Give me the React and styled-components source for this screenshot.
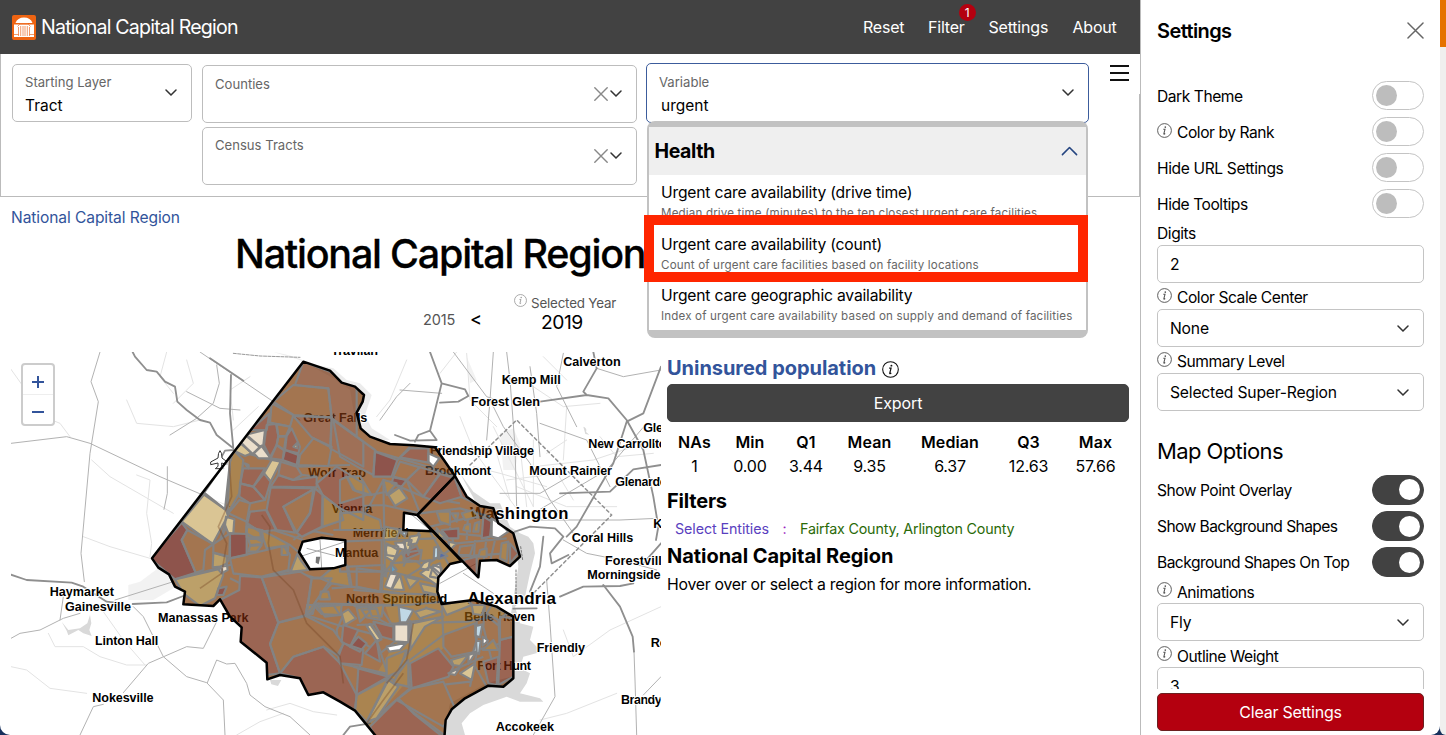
import React from 'react';
import styled, { createGlobalStyle } from 'styled-components';

const Global = createGlobalStyle`
  *{box-sizing:border-box}
  html,body{margin:0;height:735px;overflow:hidden;background:#17305c}
  body{font-family:Inter,"Liberation Sans",sans-serif;color:#000;font-size:16px;line-height:1.5;letter-spacing:-.2px}
`;
const Shell = styled.div`display:flex;width:1446px;height:735px;overflow:hidden;background:#17305c;`;
const Main = styled.main`width:1140px;height:735px;background:#fff;border-bottom-left-radius:10px;overflow:hidden;display:flex;flex-direction:column;`;
const Header = styled.header`height:54px;flex:none;background:#424242;color:#fff;display:flex;align-items:center;padding:0 24.5px 0 12px;`;
const Brand = styled.div`display:flex;align-items:center;gap:5px;font-size:19.6px;letter-spacing:-.8px;flex:1;padding-top:1px;svg{margin-top:1px}`;
const Nav = styled.nav`display:flex;gap:24px;`;
const NavItem = styled.a`position:relative;width:${p => p.$w}px;white-space:nowrap;letter-spacing:-.2px;`;
const Badge = styled.span`position:absolute;right:-11px;top:-11px;width:17px;height:17px;border-radius:50%;background:#b4000f;font-size:12px;line-height:17px;text-align:center;`;
const Controls = styled.section`position:relative;z-index:2;flex:none;height:143px;padding:9px 10px 0 11px;border:1px solid #bbb;border-top:0;border-right:0;display:flex;align-items:flex-start;`;
const RightEdge = styled.i`position:absolute;right:0;top:40px;bottom:0;width:1px;background:#bbb;`;
const Field = styled.div`position:relative;width:${p => p.$w}px;height:${p => p.$h || 58}px;margin-top:${p => p.$mt || 0}px;border:${p => (p.$focus ? '1.5px solid #3c5c9c' : '1px solid #bdbdbd')};border-radius:5px;background:#fff;display:flex;align-items:center;justify-content:space-between;padding:0 14px 0 12px;`;
const FieldText = styled.div`display:flex;flex-direction:column;align-self:flex-start;padding-top:${p => p.$top || 8}px;`;
const Small = styled.span`font-size:13.1px;line-height:19px;color:#666;letter-spacing:0;`;
const Value = styled.span`line-height:28px;padding-left:${p => p.$pl || 0}px;font-size:15.5px;letter-spacing:0;`;
const Stack = styled.div`display:flex;flex-direction:column;gap:3.5px;margin:2px 9px 0 10px;`;
const IconPair = styled.div`display:flex;align-items:center;gap:2px;`;
const Combo = styled.div`position:relative;`;
const MenuButton = styled.div`margin:1px 0 0 21px;height:18px;display:flex;`;
const Dropdown = styled.div`position:absolute;z-index:3;top:58px;left:1px;width:441px;height:217px;background:#c2c2c2;border-radius:8px;padding:6px 2px 8px;`;
const Group = styled.div`height:48px;background:#efefef;display:flex;align-items:center;justify-content:space-between;padding:1px 8px 0 5.5px;font-weight:700;font-size:19.5px;letter-spacing:-.4px;`;
const Options = styled.div`background:#fff;height:155px;padding-top:4px;`;
const Option = styled.div`height:51.7px;padding-left:12px;white-space:nowrap;`;
const OptionName = styled.div`line-height:27px;font-size:15.7px;letter-spacing:-.2px;`;
const OptionNote = styled.div`line-height:15px;font-size:11.6px;color:#666;letter-spacing:.16px;`;
const Highlight = styled.div`position:absolute;left:-3px;top:94px;width:444px;height:67px;border:10px solid #ff2600;`;
const Crumb = styled.a`flex:none;color:#32549b;font-size:15.6px;line-height:24px;padding:9px 0 0 11px;letter-spacing:-.1px;`;
const Title = styled.h1`flex:none;margin:0;height:57px;line-height:48px;font-size:39.5px;font-weight:500;padding-left:235px;letter-spacing:-1.24px;white-space:nowrap;-webkit-text-stroke:.3px #000;`;
const Years = styled.div`flex:none;height:65px;display:flex;align-items:flex-start;padding-left:423px;white-space:nowrap;`;
const YearEnd = styled.span`font-size:14.5px;color:#555;line-height:20px;margin-top:23px;width:47px;letter-spacing:-.1px;`;
const YearStep = styled.span`font-size:18px;line-height:20px;width:44px;margin-top:22px;font-weight:500;`;
const YearPick = styled.div`display:flex;flex-direction:column;width:120px;`;
const YearLabel = styled.div`display:flex;gap:4px;font-size:13.4px;line-height:17px;margin-top:8px;color:#555;letter-spacing:-.2px;svg{margin-top:-1px}`;
const YearValue = styled.div`font-size:19.3px;line-height:21px;padding-left:27px;letter-spacing:-.5px;`;
const Content = styled.div`display:flex;flex:1;`;
const MapPane = styled.div`position:relative;width:650px;height:383px;margin-left:11px;overflow:hidden;svg{display:block}`;
const ZoomBox = styled.div`position:absolute;left:10px;top:11px;width:34px;height:63px;border:2px solid #ccc;border-radius:4px;background:#fff;display:flex;flex-direction:column;`;
const ZoomKey = styled.div`flex:1;display:flex;align-items:center;justify-content:center;padding-top:4px;border-bottom:${p => (p.$line ? '1px solid #eee' : '0')};`;
const Info = styled.section`width:462px;margin-left:6px;padding-top:1px;`;
const Heading = styled.h2`margin:0;height:${p => p.$h || 30}px;line-height:30px;font-size:20px;font-weight:${p => p.$wt || 700};letter-spacing:${p => p.$ls || 0}px;color:${p => p.$c || '#000'};display:flex;align-items:center;gap:6px;white-space:nowrap;svg{margin-top:2px}`;
const Export = styled.button`display:block;width:100%;height:38px;border:1px solid #424242;border-radius:5px;background:#424242;color:#fff;font:16px Inter,sans-serif;letter-spacing:-.1px;padding:0;margin-top:1px;`;
const Stats = styled.div`display:grid;grid-template-columns:55px 56px 56px 71px 90px 67px 67px;grid-auto-rows:24px;line-height:24px;text-align:center;padding-top:8px;height:63px;`;
const StatHead = styled.b`font-weight:600;letter-spacing:.1px;`;
const Rule = styled.div`display:flex;gap:13.5px;height:24px;line-height:24px;font-size:14.3px;padding-left:8px;`;
const Tone = styled.span`color:${p => p.$c};letter-spacing:${p => p.$ls || 0}px;`;
const Hint = styled.p`margin:0;line-height:28px;font-size:15.8px;letter-spacing:-.26px;white-space:nowrap;`;
const Side = styled.aside`width:300px;height:735px;background:#fff;border-left:1px solid #bbb;border-bottom-right-radius:9px;padding:0 16px;display:flex;flex-direction:column;`;
const SideHead = styled.div`height:78px;flex:none;display:flex;justify-content:space-between;align-items:flex-start;padding-top:16px;font-size:20px;font-weight:600;letter-spacing:-.6px;svg{margin-top:6px}`;
const SideBody = styled.div`height:611px;overflow:hidden;`;
const Row = styled.div`height:36.1px;display:flex;align-items:center;justify-content:space-between;white-space:nowrap;`;
const Label = styled.span`display:flex;align-items:center;gap:5px;height:22.5px;padding-top:2px;line-height:22.5px;font-size:15.6px;letter-spacing:${p => p.$ls ?? -0.45}px;white-space:nowrap;svg{margin-top:-6px}`;
const Switch = styled.span`width:52px;height:${p => (p.$on ? 30 : 29)}px;border-radius:15px;border:1px solid ${p => (p.$on ? '#424242' : '#c4c4c4')};background:${p => (p.$on ? '#424242' : '#fff')};display:flex;align-items:center;justify-content:${p => (p.$on ? 'flex-end' : 'flex-start')};padding:0 3px;margin-top:-1px;
  &::after{content:'';width:21px;height:21px;border-radius:50%;background:${p => (p.$on ? '#fff' : '#bdbdbd')};}`;
const Input = styled.div`height:38px;border:1px solid #c4c4c4;border-radius:5px;display:flex;align-items:center;justify-content:space-between;padding:1px 14px 0 12px;margin:0 0 3.5px;font-size:15.7px;letter-spacing:-.2px;`;
const SubHead = styled.h3`margin:0;height:58px;padding-top:20px;line-height:34px;font-size:22px;font-weight:400;letter-spacing:-.6px;`;
const Clear = styled.button`flex:none;margin-top:4px;height:38px;border:1px solid #6b2020;border-radius:5px;background:#b4000f;color:#fff;font:16px Inter,sans-serif;letter-spacing:-.25px;padding:0;`;
const Edge = styled.div`width:6px;height:735px;background:#f0efee;border-top:47px solid #e57200;border-bottom-left-radius:6px;`;

const Chevron = ({ w = 12, up, c = '#333', sw = 1.5 }) => (
  <svg width={w} height={w * 0.6} viewBox="0 0 12 7" fill="none" stroke={c} strokeWidth={sw} strokeLinecap="round" strokeLinejoin="round"><path d={up ? 'M1 6 6 1l5 5' : 'M1 1l5 5 5-5'} /></svg>
);
const Cross = ({ s = 14, c = '#777', w = 1.4 }) => (
  <svg width={s} height={s} viewBox="0 0 14 14" stroke={c} strokeWidth={w} strokeLinecap="round"><path d="M.8.8l12.4 12.4M13.2.8.8 13.2" /></svg>
);
const InfoMark = ({ s = 15, c = '#555' }) => (
  <svg width={s} height={s} viewBox="0 0 15 15" fill="none" stroke={c}><circle cx="7.5" cy="7.5" r="6.9" strokeWidth=".95" /><path d="M6.3 6.3h1.700l-1.200 4.500q0 .6.7.2l.7-.5" strokeWidth="1.05" /><circle cx="8.3" cy="4.1" r=".85" fill={c} stroke="none" /></svg>
);
const Logo = () => (
  <svg width="24" height="25" viewBox="0 0 24 25"><rect width="24" height="25" rx="2" fill="#ee6412" />
    <path d="M3.500 8q2-5.500 8.500-5.500t8.500 5.500zM2 9.500h20v3H2zM2 12h20v10H2z" fill="#fff" /><path d="M5.500 11.500 8 9h8l2.500 2.500M6.500 12v9M8.700 11v10M11 11v10M13 11v10M15.300 11v10M17.500 12v9M2 19.500h5M17 19.500h5" fill="none" stroke="#ee8146" strokeWidth=".8" /></svg>
);

/* County outlines, in thirds of a pixel */
const FAIRFAX = 'M456 655 910 65 990 92 1025 128 1065 140 1092 165 1088 185 1070 218 1082 265 1110 290 1170 312 1240 316 1305 322 1365 408 1252 525 1385 664 1350 672 1315 712 1312 755 1325 792 1420 780 1490 800 1540 830 1540 1015 1510 1040 1465 1037 1395 1075 1355 1108 1337 1140 1333 1195 1133 1195 1065 1112 1020 1085 970 1057 925 1065 900 1015 840 1005 802 1018 800 968 722 905 725 862 690 830 660 778 640 798 550 793 555 755 525 740 507 703 475 683Z';
const ARLINGTON = 'M1365 408 1400 470 1440 498 1480 505 1495 550 1540 580 1560 650 1530 678 1490 660 1440 662 1435 712 1252 525Z';
const FALLS_CHURCH = 'M1212 518 1252 525 1298 574 1210 570Z';
const FAIRFAX_CITY = 'M908 605 965 593 1036 601 1036 675 1000 685 930 688 897 636Z';

const C = { b: '#7d3b07', n: '#773410', r: '#71240b', d: '#5f0c00', g: '#865106', l: '#a0782a', t: '#caad67', c: '#e3d2b7', s: '#a6c8db', u: '#1d74aa', v: '#10307f', w: '#ffffff' };

/* Census tracts: sheet offset, then fill key and vertices */
const TRACTS = [
  [450, 30, [
    ['n', '460,35 540,65 620,105 620,260 545,205 535,115 435,105'], ['b', '430,105 535,115 545,202 430,195 370,155'],
    ['n', '545,205 640,275 640,350 540,295'], ['n', '430,198 545,203 542,292 485,262'], ['b', '490,265 545,290 535,348 445,345 450,315'],
    ['b', '365,160 430,195 420,230 360,218'], ['r', '300,240 358,190 350,240'], ['c', '285,255 345,240 340,285 328,290'],
    ['c', '272,280 290,255 330,290 308,312'], ['c', '335,288 362,325 325,325 311,310'], ['t', '252,302 275,280 305,310 285,318'],
    ['r', '350,225 378,222 385,258 380,285 360,322 342,285'], ['b', '380,222 420,230 408,258 385,258'], ['r', '425,235 450,290 445,310 405,300 410,258'],
    ['b', '385,260 408,260 402,300 380,285'], ['t', '430,290 442,278 442,295'], ['d', '405,300 445,315 440,345 398,330'], ['n', '380,285 402,300 398,330 362,325'],
    ['t', '365,330 392,335 362,395 342,370'], ['g', '250,300 280,330 268,430 232,492 240,335'], ['r', '280,355 345,355 310,410 270,400'],
    ['r', '310,410 342,370 362,395 345,450'], ['r', '270,400 310,410 345,450 300,460 268,440'], ['c', '284,340 296,345 296,355'], ['n', '392,335 440,350 455,375 430,390 385,375'],
    ['r', '385,375 430,390 500,380 500,412 362,410'], ['r', '362,412 495,415 400,470 435,548 380,540 350,480'], ['b', '400,470 490,418 480,488 440,548'],
    ['r', '495,415 518,435 515,530 455,560 440,548 480,490'], ['g', '518,435 570,475 580,510 518,530'], ['r', '500,400 560,350 640,400 640,510 570,475 518,435'],
    ['t', '165,430 228,480 235,495 188,582 95,515'], ['w', '160,432 250,300 240,335 225,478'], ['b', '235,490 268,450 300,460 290,515'],
    ['r', '300,485 348,480 378,540 330,545 292,520'], ['t', '228,500 253,508 250,550 235,550 225,525'], ['b', '292,522 330,545 335,575 290,550'],
  ]],
  [0, 0, [
    ['d', '545,548 562,570 545,600 587,698 525,718 450,655'], ['b', '562,570 640,612 615,630 610,690 587,698 545,600'], ['l', '640,638 680,650 680,678 638,682'],
    ['l', '525,718 665,685 670,705 645,775 600,798 550,760'], ['d', '690,580 740,582 740,645 690,655'], ['b', '640,612 690,580 688,650 640,638'], ['c', '652,685 680,670 683,690 665,700'],
    ['d', '655,745 680,740 670,765 650,765'], ['g', '740,560 785,570 785,592 740,592'], ['g', '745,597 790,597 785,612 750,615'], ['g', '750,618 785,615 770,635 745,635'],
    ['b', '690,655 850,618 870,645 865,690 785,710 700,700'], ['l', '892,642 905,665 925,690 872,695'], ['g', '785,570 870,615 800,625 790,597'], ['g', '845,620 865,620 862,645 845,645'],
    ['g', '922,795 945,795 938,822 918,825'], ['g', '945,800 1000,795 1020,825 965,822'],
  ]],
  [600, 600, [
    ['r', '120,108 185,112 235,248 210,312 240,400 200,405 195,368 122,305 80,220 60,180 118,150'], ['n', '185,112 300,95 335,115 318,225 235,248'],
    ['b', '235,248 318,228 400,270 430,312 412,345 370,320 280,350 240,400 210,312'], ['r', '280,350 370,320 420,370 470,465 465,510 370,460 325,465 300,415 240,400'],
    ['b', '335,115 395,115 350,180 320,225'], ['g', '360,115 402,80 440,75 450,140 395,130'], ['b', '445,80 550,75 545,155 455,140'], ['g', '362,155 385,155 390,178 360,178'],
    ['g', '322,195 350,195 330,222 318,222'], ['l', '425,220 445,208 468,235 435,255'], ['g', '355,200 425,195 422,225 375,230'], ['g', '470,205 505,200 510,215 480,245'],
    ['g', '505,202 550,195 545,230 515,228'], ['l', '500,258 512,252 545,298 530,305'], ['r', '430,255 475,270 450,320 425,305'], ['d', '450,320 475,290 500,310 480,335'],
    ['r', '495,340 530,300 540,365'], ['r', '415,350 430,310 490,330 485,375 420,370'], ['r', '475,385 565,410 470,465'], ['g', '470,465 565,415 500,545 465,510'],
    ['l', '500,545 565,420 595,440 530,535'], ['r', '510,560 595,475 640,520 740,600 530,600'],
  ]],
  [1020, 120, [
    ['n', '-20,120 105,210 100,285 60,265 0,230'], ['d', '105,215 172,240 155,290 100,290'], ['r', '172,240 210,205 265,205 265,248 180,232'], ['b', '180,245 240,262 200,300 160,290'],
    ['w', '265,220 298,235 280,260 265,245'], ['n', '240,262 300,280 250,350 200,300'], ['d', '160,292 200,300 185,320 155,310'], ['g', '20,290 60,288 95,345 40,330'],
    ['l', '145,345 178,322 202,355 165,378'], ['g', '130,300 170,310 140,345'], ['b', '0,300 20,290 45,332 80,345 0,370'], ['r', '300,282 345,295 365,350 300,370 250,350'],
    ['r', '345,295 420,375 365,352'], ['g', '290,395 330,395 330,435 300,425'], ['g', '335,400 355,400 350,425'], ['d', '305,450 355,445 355,475 325,475'],
    ['g', '365,400 400,390 415,410 375,420'], ['d', '430,410 455,425 450,470 425,475'], ['w', '455,415 485,435 505,455 475,475 455,470'], ['g', '375,435 390,432 390,455 370,450'],
    ['g', '405,430 418,425 415,455 400,455'], ['l', '290,445 322,480 295,470'], ['b', '360,500 400,495 390,525 355,525'], ['g', '420,510 440,505 440,530 415,530'],
    ['g', '485,490 505,485 500,545 480,535'], ['r', '510,490 535,520 510,550'], ['r', '370,540 410,530 410,590 375,560'],
    ['g', '0,400 60,395 120,420 125,450 0,450'], ['l', '135,440 180,450 170,475 130,480'], ['c', '165,488 195,488 195,510 175,505'], ['s', '180,455 200,455 195,470'],
    ['t', '140,490 175,510 160,545 135,530'], ['s', '283,503 294,500 294,532 281,537'], ['v', '300,515 322,528 296,537'], ['b', '185,520 245,510 240,545 200,540'],
    ['u', '153,550 170,570 153,580'], ['t', '250,550 270,540 265,570 240,565'], ['c', '280,555 305,565 300,595 270,590'], ['r', '195,515 230,498 240,520 190,540'],
    ['b', '0,485 125,480 125,575 0,575'], ['t', '325,485 350,490 330,510'], ['t', '210,470 240,465 230,490 205,495'],
  ]],
  [1080, 600, [
    ['b', '-10,85 65,95 60,155 -10,140'], ['c', '75,140 90,100 112,103 95,147'], ['t', '95,148 120,105 132,150'], ['l', '135,110 175,120 150,145'], ['s', '70,105 80,95 78,110'],
    ['t', '180,100 210,80 245,120 230,135'], ['c', '215,80 240,70 245,105'], ['t', '130,5 155,0 145,45'], ['l', '180,130 230,140 235,165 190,155'], ['g', '5,210 50,205 60,240 20,232'],
    ['t', '75,15 115,20 110,50 80,45'], ['s', '116,200 160,210 140,247 120,247'], ['l', '165,215 200,205 240,215 180,235'], ['l', '155,250 250,230 195,260 150,330'], ['c', '103,253 145,253 145,307 103,304'],
    ['w', '80,320 140,308 120,330 88,335'], ['l', '245,195 320,180 335,195 260,225'], ['l', '335,195 375,195 365,225 340,222'], ['b', '250,285 345,250 350,335 275,350 250,320'],
    ['r', '150,370 235,325 280,380 265,410 155,445'], ['b', '155,445 250,425 285,505 250,560 110,480'], ['s', '348,258 367,253 360,292 346,287'], ['s', '349,303 362,303 357,342 340,334'],
    ['w', '368,290 384,302 368,317'], ['g', '368,330 400,300 415,330'], ['l', '273,360 325,345 300,378 280,375'], ['c', '326,345 347,338 325,372'], ['t', '300,400 345,370 335,420'],
    ['g', '115,400 145,360 145,440 100,430'], ['g', '80,355 140,330 115,395 80,410'], ['r', '370,365 415,350 410,435 385,430'], ['b', '420,230 460,235 460,290 420,300'],
    ['r', '420,300 460,290 460,410 415,435'], ['g', '395,195 440,220 415,240 380,220'], ['r', '40,245 100,260 100,300 65,290'], ['c', '265,400 298,385 285,405'],
    ['t', '20,258 30,252 62,298 50,303'],
  ]],
];

/* Tract boundaries that run across several tracts */
const MESH = [
  [450, 30, 'M440 350 600 345M362 320 400 330 440 350M250 300 365 330M170 430 235 490 370 540 460 570M235 490 205 590M290 515 285 600M430 395 455 375 500 380M455 560 520 530 600 500'],
  [0, 0, 'M525 718 690 675 870 640M640 638 680 560M690 650 665 700M700 700 785 710 870 692M740 592 740 560M865 690 940 712 1060 720M940 712 925 800M925 795 1080 795M870 615 900 640M740 645 730 700 715 765 670 775M690 715 720 730M880 600 920 570 1000 585'],
  [600, 600, 'M395 130 350 180 320 225M318 225 430 260 570 295M325 190 600 195M430 225 410 270 420 370M420 370 600 410M440 185 560 250M530 300 565 410 600 350M480 330 480 440M395 145 455 140 600 160'],
  [1020, 120, 'M-30 125 110 215 265 260 345 290M172 240 210 200M240 262 330 320M250 350 130 300 60 430M-10 345 90 345 190 325M0 380 130 375 240 400M-20 450 150 445 300 455M130 300 135 590M200 300 240 400M300 280 250 350 360 370M240 400 360 385 450 410M270 440 400 410 460 420M280 455 450 470M330 440 340 490M385 390 380 480M350 490 500 475M355 530 500 520M405 480 400 560M440 470 430 550M465 480 450 545M140 480 290 475M240 450 190 560M150 550 280 540M200 590 330 510M270 455 330 560'],
  [1080, 600, 'M-20 90 70 90 240 130M0 20 80 90 130 30 200 90M-20 150 120 160 240 165M-10 200 140 195 330 178M60 200 100 260 120 320M150 240 150 330 90 410M150 250 320 245 460 220M-10 255 110 250 240 235M200 200 150 330M245 190 250 290M250 285 150 360M110 300 60 340 -20 290M-20 380 80 410 155 445 330 425M90 410 10 520M140 360 150 445 20 555M110 480 260 590M245 425 285 510M270 350 350 330 460 300M350 240 350 340 330 440M375 200 370 260 400 380M415 230 420 350 410 440M260 400 370 350M320 180 420 260M340 370 380 440'],
];

const ROADS = {
  wide: 'M398 36 405 50 440 90 470 95 495 125 525 140 532 185 560 210 600 240 630 248 650 285 700 325M693 105 690 220 700 325M630 55 730 122M33 704 80 720 215 728 250 740 320 785 345 788M398 792 500 787 550 768M1290 36 1325 130 1395 148 1405 168 1375 185 1320 188M1325 130 1290 272 1255 285 1245 305M1290 272 1310 300 1230 302 1185 285M1780 36 1790 85 1750 155 1760 165 1825 175 1880 240 1930 330 1960 470 1975 560 1968 600M1620 185 1760 165M1983 80 1930 220 1880 245 1840 370 1790 455 1730 560 1700 590M1983 375 1900 388 1830 455 1680 460M1545 575 1590 560 1665 565 1690 590 1650 640 1655 670 1705 645M1630 590 1620 680 1590 755M1680 770 1750 740 1860 738 1900 730M1810 735 1860 800 1898 890 1902 935M1983 610 1930 670M1030 1185 1050 1160 1110 1150M1540 806 1610 805M665 350 675 332 700 330',
  mid: 'M300 36 273 125 295 185 270 340 243 640 253 725M33 310 200 290 270 310 480 410 690 500M33 895 60 880 120 870 190 835 240 820M240 1185 280 1100 310 1093M370 1058 445 970 560 920 610 925 650 845M400 800 430 830 490 950 560 1010 620 1028 670 1080 675 1185M622 1028 650 960 680 972 705 970 740 1030 750 1065 795 1100 870 1130 930 1185M600 36 820 185 900 240M502 380 502 460 492 508M650 75 658 130 640 190 590 235 510 285M560 155 660 205 720 210M345 780 520 725M1590 80 1610 220 1620 350M1480 36 1470 180 1460 300M1520 36 1530 120 1545 320 1550 500M1470 180 1510 260 1590 370 1650 480 1720 580M1690 40 1670 140 1730 260M1790 85 1870 110 1983 90M1600 520 1820 390 1940 250M1600 540 1860 540 1970 535M1640 720 1650 850 1665 1070 1600 1185M1902 935 1905 1020 1910 1185M1930 1065 1983 1010M180 840 190 770M1500 460 1620 460 1740 390M1690 600 1760 640 1860 660 1970 690M1620 250 1760 300 1830 440M1360 36 1460 170 1520 190M1230 130 1190 170 1140 240M1325 160 1200 150M1390 700 1480 760M1320 730 1430 670',
  thin: 'M33 88 70 140 130 230 180 250 210 290M275 360 330 410 520 520M410 405 450 420 440 520 455 610 450 650M250 590 330 620 450 655M33 980 80 990 150 1045 260 1060M145 880 165 920 250 920 300 950 380 975 440 975M500 36 480 110 520 160M380 180 410 250 520 260 600 240M750 110 690 150 700 240M775 200 700 270M1600 140 1690 200 1800 190M1380 230 1420 330 1560 520M1320 100 1370 36M1630 50 1700 120M1400 40 1410 180 1490 260M1690 870 1720 950 1830 870 1983 800M1620 1140 1700 1120 1850 1060M1220 60 1170 180 1130 230M560 60 580 130 520 190M710 1185 780 1145 850 1120M1600 380 1780 360 1900 320M1480 260 1600 500M1700 200 1690 360M1800 290 1850 350 1960 340M310 815 370 900 435 975M800 1110 870 1090 940 1115 1010 1125M1420 380 1500 400 1640 440M1560 320 1580 500M1520 420 1680 400M1490 340 1530 480M1600 300 1600 500M1660 380 1720 480M1550 440 1700 500 1850 500M1640 340 1700 300',
};

const LABELS = [
  ['Haymarket', 149, 768, 193], ['Gainesville', 195, 814, 198], ['Manassas Park', 474, 846, 272], ['Linton Hall', 285, 914, 190], ['Nokesville', 277, 1086, 184],
  ['Great Falls', 910, 247, 192], ['Wolf Trap', 925, 410, 173], ['Vienna', 995, 518, 122], ['Mantua', 1005, 651, 130], ['Travilah', 994, 46, 140],
  ['Calverton', 1690, 79, 172], ['Kemp Mill', 1505, 131, 177], ['Forest Glen', 1413, 199, 207], ['Friendship Village', 1290, 345, 312], ['Brookmont', 1275, 404, 198],
  ['Mount Rainier', 1588, 405, 248], ['New Carrollton', 1765, 325, 257], ['Glenn Dale', 1930, 276, 190], ['Glenarden', 1846, 439, 176], ['Washington', 1410, 538, 295, 50],
  ['Coral Hills', 1715, 605, 185], ['Kettering', 1960, 564, 160], ['Forestville', 1815, 675, 192], ['Morningside', 1762, 717, 220], ['Alexandria', 1402, 793, 266, 51],
  ['Belle Haven', 1393, 843, 212], ['Friendly', 1610, 937, 145], ['Fort Hunt', 1432, 990, 161], ['Rosaryville', 1952, 921, 200], ['Brandywine', 1863, 1091, 200],
  ['Accokeek', 1487, 1172, 175], ['North Springfield', 1038, 790, 304], ['Merrifield', 1058, 592, 168],
];

const MapView = () => (
  <svg width="650" height="383" viewBox="33 36 1950 1149">
    <defs><clipPath id="land"><path clipRule="evenodd" d={FAIRFAX + FALLS_CHURCH + FAIRFAX_CITY} /><path d={ARLINGTON} /></clipPath></defs>
    <g fill="#d9d9d9">
      <path d="M820 36Q900 50 920 70L1000 85 1040 120 1080 130 1115 165 1095 225 1115 265 1170 300 1135 300 1070 270 1050 150 1000 115 900 60Z" opacity=".5" />
      <path d="M1380 400 1420 455 1470 490 1500 490 1530 560 1560 580 1585 590 1600 610 1605 640 1590 700 1575 770 1545 800 1560 850 1600 860 1590 900 1625 935 1570 950 1560 985 1590 1000 1580 1030 1560 1060 1620 1075 1630 1085 1560 1085 1520 1070 1450 1095 1410 1120 1385 1150 1395 1185 1330 1185 1350 1090 1460 1030 1535 1010 1530 840 1555 680 1545 590 1440 510Z" />
      <path d="M185 845 205 870 240 865 262 850 270 825 274 850 268 870 275 888 250 880 235 870 205 886 200 872ZM1750 260q12 4 8 16l10 8-12-2zM810 1020h34l-10 18-20-5z" />
      <path d="M1500 280 1540 265 1560 310 1545 390 1510 390ZM385 735 420 725 480 680 515 720 520 745 460 780 385 780ZM1400 50 1430 120 1410 130 1405 90Z" opacity=".35" />
    </g>
    <g fill="none" strokeLinejoin="round" strokeLinecap="round">
      <path d={ROADS.thin} stroke="#e3e3e3" strokeWidth="3" /><path d={ROADS.mid} stroke="#b2b2b2" strokeWidth="3" /><path d={ROADS.wide} stroke="#8f8f8f" strokeWidth="5.500" />
      <path d="M1410 375 1550 240 1835 525 1600 760" stroke="#909090" strokeWidth="4.500" strokeDasharray="9 9" /><path d="M700 40 780 48 900 52" stroke="#999" strokeWidth="3" strokeDasharray="9 4" />
      <path d="M1548 690v90M1562 620 1568 660" stroke="#777" strokeWidth="3" strokeDasharray="6 5" />
    </g>
    <path d="M660 332q-6 6-6 22l-22 12v8l22-5v10l-8 7h26l-7-8v-9l17 5v-8l-16-12q0-17-6-22z" fill="#fff" stroke="#333" strokeWidth="3" />
    <path d="M920 625 1036 655M900 650 1036 605M960 600 965 685M1230 520 1290 570" stroke="#aaa" strokeWidth="3" /><path d="M948 650h13l-5 23-9-5z" fill="#777" />
    <g fontFamily="Liberation Sans, sans-serif" fontWeight="700" fill="#000" stroke="#fff" strokeWidth="6" paintOrder="stroke" strokeLinejoin="round" letterSpacing="0">
      {LABELS.map(([t, x, y, w, s]) => <text key={t} x={x} y={y} textLength={w} fontSize={s || 38}>{t}</text>)}
    </g>
    <g clipPath="url(#land)">
      <g opacity=".7">
        <path d={FAIRFAX + ARLINGTON} fill={C.b} />
        <path d="M1150 560 1290 570 1385 664 1315 712 1325 792 1490 800 1420 850 1240 1000 1090 1180 1065 1110 1190 900 1150 780Z" fill={C.g} />
        <g fill="none" stroke="#4f4f4f" strokeWidth="6.500">{MESH.map(([x, y, d]) => <path key={x} transform={`translate(${x} ${y})`} d={d} />)}</g>
        {TRACTS.map(([x, y, list]) => <g key={x} transform={`translate(${x} ${y})`}>{list.map(([k, p], i) => <polygon key={i} points={p} fill={C[k]} />)}</g>)}
      </g>
      <g fill="none" stroke="#838383" strokeWidth="6.500" strokeLinejoin="round">
        {TRACTS.map(([x, y, list]) => <g key={x} transform={`translate(${x} ${y})`}>{list.map(([k, p], i) => <polygon key={i} points={p} />)}</g>)}
      </g>
      <g fill="none" stroke="#704020" strokeOpacity=".35" strokeWidth="5"><path d="M685 330 695 470 655 560 680 610 665 700 600 745M785 525 810 560 805 610 820 690 850 720 880 750 920 850 1020 950 1030 1030M1210 1000 1150 1080 1100 1150M1240 850 1220 960 1160 1030" /></g>
    </g>
    <g fill="none" stroke="#000" strokeWidth="7.500" strokeLinejoin="round"><path d={FAIRFAX} /><path d={ARLINGTON} /><path d={FALLS_CHURCH} /><path d={FAIRFAX_CITY} /></g>
  </svg>
);

const Setting = ({ label, info, on, ls }) => <Row><Label $ls={ls}>{info && <InfoMark />}{label}</Label><Switch $on={on} /></Row>;
const SettingField = ({ label, info, value, select }) => <><Label>{info && <InfoMark />}{label}</Label><Input>{value}{select && <Chevron />}</Input></>;
const Place = ({ label }) => <Field $w={435}><FieldText $top={8.5}><Small>{label}</Small></FieldText><IconPair><Cross c="#888" /><Chevron /></IconPair></Field>;

const CHOICES = [
  ['Urgent care availability (drive time)', 'Median drive time (minutes) to the ten closest urgent care facilities'],
  ['Urgent care availability (count)', 'Count of urgent care facilities based on facility locations'],
  ['Urgent care geographic availability', 'Index of urgent care availability based on supply and demand of facilities'],
];
const STATS = [['NAs', '1'], ['Min', '0.00'], ['Q1', '3.44'], ['Mean', '9.35'], ['Median', '6.37'], ['Q3', '12.63'], ['Max', '57.66']];

export default function App() {
  return (
    <><Global /><Shell>
      <Main>
        <Header><Brand><Logo />National Capital Region</Brand>
          <Nav><NavItem $w={41}>Reset</NavItem><NavItem $w={36.5}>Filter<Badge>1</Badge></NavItem><NavItem $w={60}>Settings</NavItem><NavItem $w={43}>About</NavItem></Nav></Header>
        <Controls><RightEdge />
          <Field $w={180} $mt={1}><FieldText><Small>Starting Layer</Small><Value>Tract</Value></FieldText><Chevron /></Field>
          <Stack><Place label="Counties" /><Place label="Census Tracts" /></Stack>
          <Combo><Field $w={443} $h={60} $focus><FieldText $top={8.5}><Small>Variable</Small><Value $pl={2}>urgent</Value></FieldText><Chevron /></Field>
            <Dropdown><Group>Health<Chevron up w={17} c="#254580" sw={1.1} /></Group>
              <Options>{CHOICES.map(([a, b]) => <Option key={a}><OptionName>{a}</OptionName><OptionNote>{b}</OptionNote></Option>)}</Options><Highlight /></Dropdown></Combo>
          <MenuButton><svg width="19" height="18" viewBox="0 0 19 18" stroke="#111" strokeWidth="2"><path d="M0 2h19M0 9h19M0 16h19" /></svg></MenuButton>
        </Controls>
        <Crumb>National Capital Region</Crumb>
        <Title>National Capital Region</Title>
        <Years><YearEnd>2015</YearEnd><YearStep>&lt;</YearStep><YearPick><YearLabel><InfoMark s={13} c="#999" />Selected Year</YearLabel><YearValue>2019</YearValue></YearPick></Years>
        <Content>
          <MapPane><MapView /><ZoomBox>
            <ZoomKey $line><svg width="12" height="12" stroke="#32549b" strokeWidth="2"><path d="M0 6h12M6 0v12" /></svg></ZoomKey>
            <ZoomKey><svg width="12" height="12" stroke="#32549b" strokeWidth="2"><path d="M0 6h12" /></svg></ZoomKey></ZoomBox></MapPane>
          <Info>
            <Heading $c="#32549b" $ls={-0.04}>Uninsured population<InfoMark s={17} c="#111" /></Heading>
            <Export>Export</Export>
            <Stats>{STATS.map(([h]) => <StatHead key={h}>{h}</StatHead>)}{STATS.map(([h, v]) => <span key={h}>{v}</span>)}</Stats>
            <Heading $ls={-0.2} $h={32}>Filters</Heading>
            <Rule><Tone $c="#5a3fc0" $ls={-0.1}>Select Entities</Tone><Tone $c="#9a20c0">:</Tone><Tone $c="#2a6a08" $ls={-0.2}>Fairfax County, Arlington County</Tone></Rule>
            <Heading $ls={-0.04}>National Capital Region</Heading>
            <Hint>Hover over or select a region for more information.</Hint>
          </Info>
        </Content>
      </Main>
      <Side>
        <SideHead>Settings<Cross s={17} c="#666" w={1.2} /></SideHead>
        <SideBody>
          <Setting label="Dark Theme" /><Setting label="Color by Rank" info /><Setting label="Hide URL Settings" ls={-0.38} /><Setting label="Hide Tooltips" />
          <SettingField label="Digits" value="2" /><SettingField label="Color Scale Center" info value="None" select /><SettingField label="Summary Level" info value="Selected Super-Region" select />
          <SubHead>Map Options</SubHead>
          <Setting label="Show Point Overlay" on ls={-0.5} /><Setting label="Show Background Shapes" on ls={-0.58} /><Setting label="Background Shapes On Top" on ls={-0.55} />
          <SettingField label="Animations" info value="Fly" select /><SettingField label="Outline Weight" info value="3" />
        </SideBody>
        <Clear>Clear Settings</Clear>
      </Side>
      <Edge />
    </Shell></>
  );
}
